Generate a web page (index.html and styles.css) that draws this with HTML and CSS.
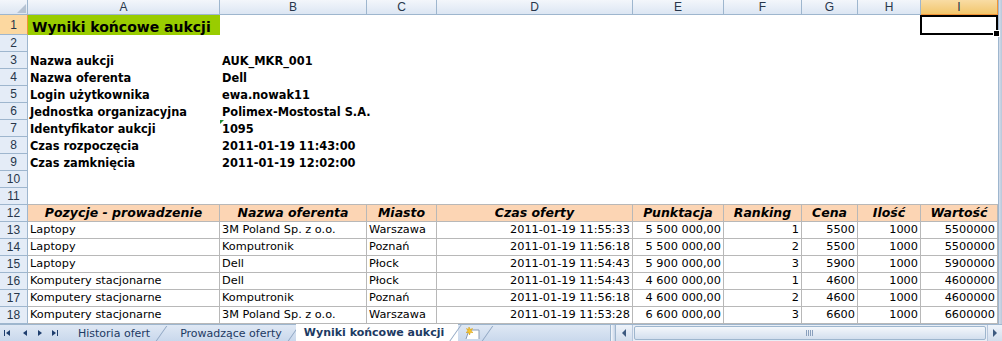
FILE: index.html
```
<!DOCTYPE html>
<html lang="pl">

<head>
	<meta charset="UTF-8">
	<title>Wyniki końcowe aukcji</title>
	<link rel="stylesheet" href="styles.css">
</head>

<body>
	<div class="window">
		<div class="sheet">
			<div class="grid">
				<div class="row head">
					<div class="corner">
						<svg width="10" height="10" viewBox="0 0 10 10"><path d="M10 1 L10 10 L1 10 Z" fill="#b6c3d3"/></svg>
					</div>
					<div class="ch">A</div>
					<div class="ch">B</div>
					<div class="ch">C</div>
					<div class="ch">D</div>
					<div class="ch">E</div>
					<div class="ch">F</div>
					<div class="ch">G</div>
					<div class="ch">H</div>
					<div class="ch sel">I</div>
				</div>
				<div class="row first">
					<div class="rh sel">1</div>
					<div class="c title">Wyniki końcowe aukcji</div>
					<div class="c"></div>
					<div class="c"></div>
					<div class="c"></div>
					<div class="c"></div>
					<div class="c"></div>
					<div class="c"></div>
					<div class="c"></div>
					<div class="c active"></div>
				</div>
				<div class="row"><div class="rh">2</div></div>
				<div class="row info"><div class="rh">3</div><div class="c">Nazwa aukcji</div><div class="c">AUK_MKR_001</div></div>
				<div class="row info"><div class="rh">4</div><div class="c">Nazwa oferenta</div><div class="c">Dell</div></div>
				<div class="row info"><div class="rh">5</div><div class="c">Login użytkownika</div><div class="c">ewa.nowak11</div></div>
				<div class="row info"><div class="rh">6</div><div class="c">Jednostka organizacyjna</div><div class="c">Polimex-Mostostal S.A.</div></div>
				<div class="row info"><div class="rh">7</div><div class="c">Identyfikator aukcji</div><div class="c text-num">1095</div></div>
				<div class="row info"><div class="rh">8</div><div class="c">Czas rozpoczęcia</div><div class="c">2011-01-19 11:43:00</div></div>
				<div class="row info"><div class="rh">9</div><div class="c">Czas zamknięcia</div><div class="c">2011-01-19 12:02:00</div></div>
				<div class="row"><div class="rh">10</div></div>
				<div class="row above">
					<div class="rh">11</div>
					<div class="c"></div><div class="c"></div><div class="c"></div><div class="c"></div><div class="c"></div>
					<div class="c"></div><div class="c"></div><div class="c"></div><div class="c"></div>
				</div>
				<div class="row tbl th">
					<div class="rh">12</div>
					<div class="c">Pozycje - prowadzenie</div>
					<div class="c">Nazwa oferenta</div>
					<div class="c">Miasto</div>
					<div class="c">Czas oferty</div>
					<div class="c">Punktacja</div>
					<div class="c">Ranking</div>
					<div class="c">Cena</div>
					<div class="c">Ilość</div>
					<div class="c">Wartość</div>
				</div>
				<div class="row tbl">
					<div class="rh">13</div>
					<div class="c">Laptopy</div><div class="c">3M Poland Sp. z o.o.</div><div class="c">Warszawa</div>
					<div class="c r">2011-01-19 11:55:33</div><div class="c r">5 500 000,00</div><div class="c r">1</div>
					<div class="c r">5500</div><div class="c r">1000</div><div class="c r">5500000</div>
				</div>
				<div class="row tbl">
					<div class="rh">14</div>
					<div class="c">Laptopy</div><div class="c">Komputronik</div><div class="c">Poznań</div>
					<div class="c r">2011-01-19 11:56:18</div><div class="c r">5 500 000,00</div><div class="c r">2</div>
					<div class="c r">5500</div><div class="c r">1000</div><div class="c r">5500000</div>
				</div>
				<div class="row tbl">
					<div class="rh">15</div>
					<div class="c">Laptopy</div><div class="c">Dell</div><div class="c">Płock</div>
					<div class="c r">2011-01-19 11:54:43</div><div class="c r">5 900 000,00</div><div class="c r">3</div>
					<div class="c r">5900</div><div class="c r">1000</div><div class="c r">5900000</div>
				</div>
				<div class="row tbl">
					<div class="rh">16</div>
					<div class="c">Komputery stacjonarne</div><div class="c">Dell</div><div class="c">Płock</div>
					<div class="c r">2011-01-19 11:54:43</div><div class="c r">4 600 000,00</div><div class="c r">1</div>
					<div class="c r">4600</div><div class="c r">1000</div><div class="c r">4600000</div>
				</div>
				<div class="row tbl">
					<div class="rh">17</div>
					<div class="c">Komputery stacjonarne</div><div class="c">Komputronik</div><div class="c">Poznań</div>
					<div class="c r">2011-01-19 11:56:18</div><div class="c r">4 600 000,00</div><div class="c r">2</div>
					<div class="c r">4600</div><div class="c r">1000</div><div class="c r">4600000</div>
				</div>
				<div class="row tbl">
					<div class="rh">18</div>
					<div class="c">Komputery stacjonarne</div><div class="c">3M Poland Sp. z o.o.</div><div class="c">Warszawa</div>
					<div class="c r">2011-01-19 11:53:28</div><div class="c r">6 600 000,00</div><div class="c r">3</div>
					<div class="c r">6600</div><div class="c r">1000</div><div class="c r">6600000</div>
				</div>
			</div>
			<div class="vscroll"></div>
		</div>
		<div class="tabbar">
			<div class="nav">
				<svg width="62" height="16" viewBox="0 0 62 16">
					<rect x="4" y="5" width="1" height="6" fill="#1f3e6e"/>
					<path d="M10 5 L6 8 L10 11 Z" fill="#1f3e6e"/>
					<path d="M27 5 L23 8 L27 11 Z" fill="#1f3e6e"/>
					<path d="M38 5 L42 8 L38 11 Z" fill="#1f3e6e"/>
					<path d="M52 5 L56 8 L52 11 Z" fill="#1f3e6e"/>
					<rect x="57" y="5" width="1" height="6" fill="#1f3e6e"/>
				</svg>
			</div>
			<div class="tab">Historia ofert</div>
			<div class="tab">Prowadzące oferty</div>
			<div class="tab current">Wyniki końcowe aukcji</div>
			<div class="tab add">
				<svg width="18" height="14" viewBox="0 0 18 14">
					<path d="M2 13 L5 4 L15 4 L15 13" fill="#fff" stroke="#8a9bb3"/>
					<path d="M5 1 L6 3.5 L8.5 2.5 L7 5 L9 6.5 L6.3 6.6 L5.5 9 L4.7 6.6 L2 6.5 L4 5 L2.5 2.5 L4.5 3.5 Z" fill="#f4c430" stroke="#d99a00" stroke-width="0.5"/>
				</svg>
			</div>
			<div class="hscroll">
				<div class="split"></div>
				<div class="btn">
					<svg width="8" height="8" viewBox="0 0 8 8"><path d="M6 0 L2 4 L6 8 Z" fill="#3d5a80"/></svg>
				</div>
				<div class="track">
					<div class="thumb">
						<svg width="8" height="6" viewBox="0 0 8 6">
							<path d="M0.5 0 V6 M2.5 0 V6 M4.5 0 V6 M6.5 0 V6" stroke="#8aa0bd"/>
						</svg>
					</div>
				</div>
				<div class="btn right">
					<svg width="8" height="8" viewBox="0 0 8 8"><path d="M2 0 L6 4 L2 8 Z" fill="#3d5a80"/></svg>
				</div>
			</div>
		</div>
	</div>
</body>

</html>
```

FILE: styles.css
```
body
{
	margin: 0;
	font-family: 'DejaVu Sans', 'Verdana', sans-serif;
	font-size: 11.3px;
	color: #000;
	background-color: #fff;
	overflow: hidden;
}

.window
{
	width: 1002px;
	height: 341px;
	display: flex;
	flex-direction: column;
}

.sheet
{
	display: flex;
	height: 324px;
}

.grid
{
	width: 998px;
}

.vscroll
{
	width: 4px;
	background: linear-gradient(to right, #d4deeb, #b8c7da);
	border-left: 1px solid #9eb6ce;
	box-sizing: border-box;
}

.row
{
	display: grid;
	grid-template-columns: 28px 192px 147px 70px 196px 91px 78px 56px 63px 77px;
	height: 17px;
}

.row > div
{
	box-sizing: border-box;
	display: flex;
	align-items: flex-end;
	white-space: nowrap;
	line-height: 14px;
}

.row.head
{
	height: 15px;
}

.row.first
{
	height: 20px;
}

/* column and row headers */
.corner
{
	background: linear-gradient(#f3f6fb, #dde6f2);
	border-right: 1px solid #9eb6ce;
	border-bottom: 1px solid #9eb6ce;
	justify-content: flex-end;
	padding: 0 1px 1px 0;
}

.ch
{
	justify-content: center;
	align-items: center !important;
	background: linear-gradient(#f3f6fb, #dce6f3);
	border-right: 1px solid #9eb6ce;
	border-bottom: 1px solid #9eb6ce;
	font-family: 'Liberation Sans', sans-serif;
	font-size: 12px;
	color: #27364a;
}

.ch.sel
{
	background: linear-gradient(#f9dca4, #f2c66c);
	border-bottom-color: #f29436;
	border-right-color: #f29436;
}

.rh
{
	justify-content: center;
	align-items: center !important;
	background-color: #e4ecf7;
	border-right: 1px solid #9eb6ce;
	border-bottom: 1px solid #9eb6ce;
	font-family: 'Liberation Sans', sans-serif;
	font-size: 12px;
	color: #27364a;
}

.rh.sel
{
	background-color: #fcd8a0;
	border-right-color: #f29436;
}

/* cells */
.c
{
	padding: 0 2px 1px 2px;
}

.c.r
{
	justify-content: flex-end;
}

.title
{
	background-color: #99cc00;
	font-weight: bold;
	font-size: 14px;
	padding-left: 4px;
	line-height: 17px;
}

.active
{
	position: relative;
	border: 2px solid #000;
	margin-left: -1px;
}

.active::after
{
	content: '';
	position: absolute;
	right: -4px;
	bottom: -4px;
	width: 5px;
	height: 5px;
	background-color: #000;
	border: 1px solid #fff;
}

.info .c
{
	font-weight: bold;
	font-size: 11.4px;
}

.text-num
{
	position: relative;
}

.text-num::before
{
	content: '';
	position: absolute;
	left: 0;
	top: 0;
	border-top: 4px solid #1e8c32;
	border-right: 4px solid transparent;
}

.above .c
{
	border-bottom: 1px solid #b8b8b8;
}

.tbl .c
{
	border-right: 1px solid #b8b8b8;
	border-bottom: 1px solid #b8b8b8;
	overflow: hidden;
}

.th .c
{
	background-color: #fcd5b4;
	justify-content: center;
	font-weight: bold;
	font-style: italic;
	font-size: 12.5px;
}

/* sheet tabs */
.tabbar
{
	height: 17px;
	display: flex;
	background: linear-gradient(#dfe8f4, #c9d8ec);
	border-top: 1px solid #9eb6ce;
	box-sizing: border-box;
}

.nav
{
	width: 62px;
	display: flex;
	align-items: center;
}

.tab
{
	position: relative;
	display: flex;
	align-items: center;
	padding: 0 14px 0 16px;
	color: #1d3a63;
	font-size: 11px;
}

.tab::after
{
	content: '';
	position: absolute;
	right: 2px;
	top: 1px;
	bottom: 0;
	width: 1px;
	background-color: #8ea5c2;
	transform: skewX(-35deg);
}

.tab.current
{
	background-color: #fff;
	font-weight: bold;
	margin-top: -1px;
	padding-left: 8px;
}

.tab.add
{
	padding: 0 8px 0 6px;
}

.hscroll
{
	margin-left: auto;
	width: 392px;
	display: flex;
	align-items: stretch;
}

.split
{
	width: 4px;
	background: linear-gradient(to right, #f5f8fc, #c5d3e6);
	border-left: 1px solid #9eb6ce;
	border-right: 1px solid #9eb6ce;
}

.btn
{
	width: 16px;
	display: flex;
	align-items: center;
	justify-content: center;
	background: linear-gradient(#eef3fa, #d2deed);
	border-right: 1px solid #b7c7dc;
}

.btn.right
{
	width: 14px;
	border-right: none;
	border-left: 1px solid #b7c7dc;
}

.track
{
	flex: 1;
	display: flex;
	padding: 1px 1px;
	background-color: #e8eef6;
}

.thumb
{
	flex: 1;
	display: flex;
	align-items: center;
	justify-content: center;
	background: linear-gradient(#f4f7fb, #d3dfee);
	border: 1px solid #9eb6ce;
	border-radius: 2px;
}
```
